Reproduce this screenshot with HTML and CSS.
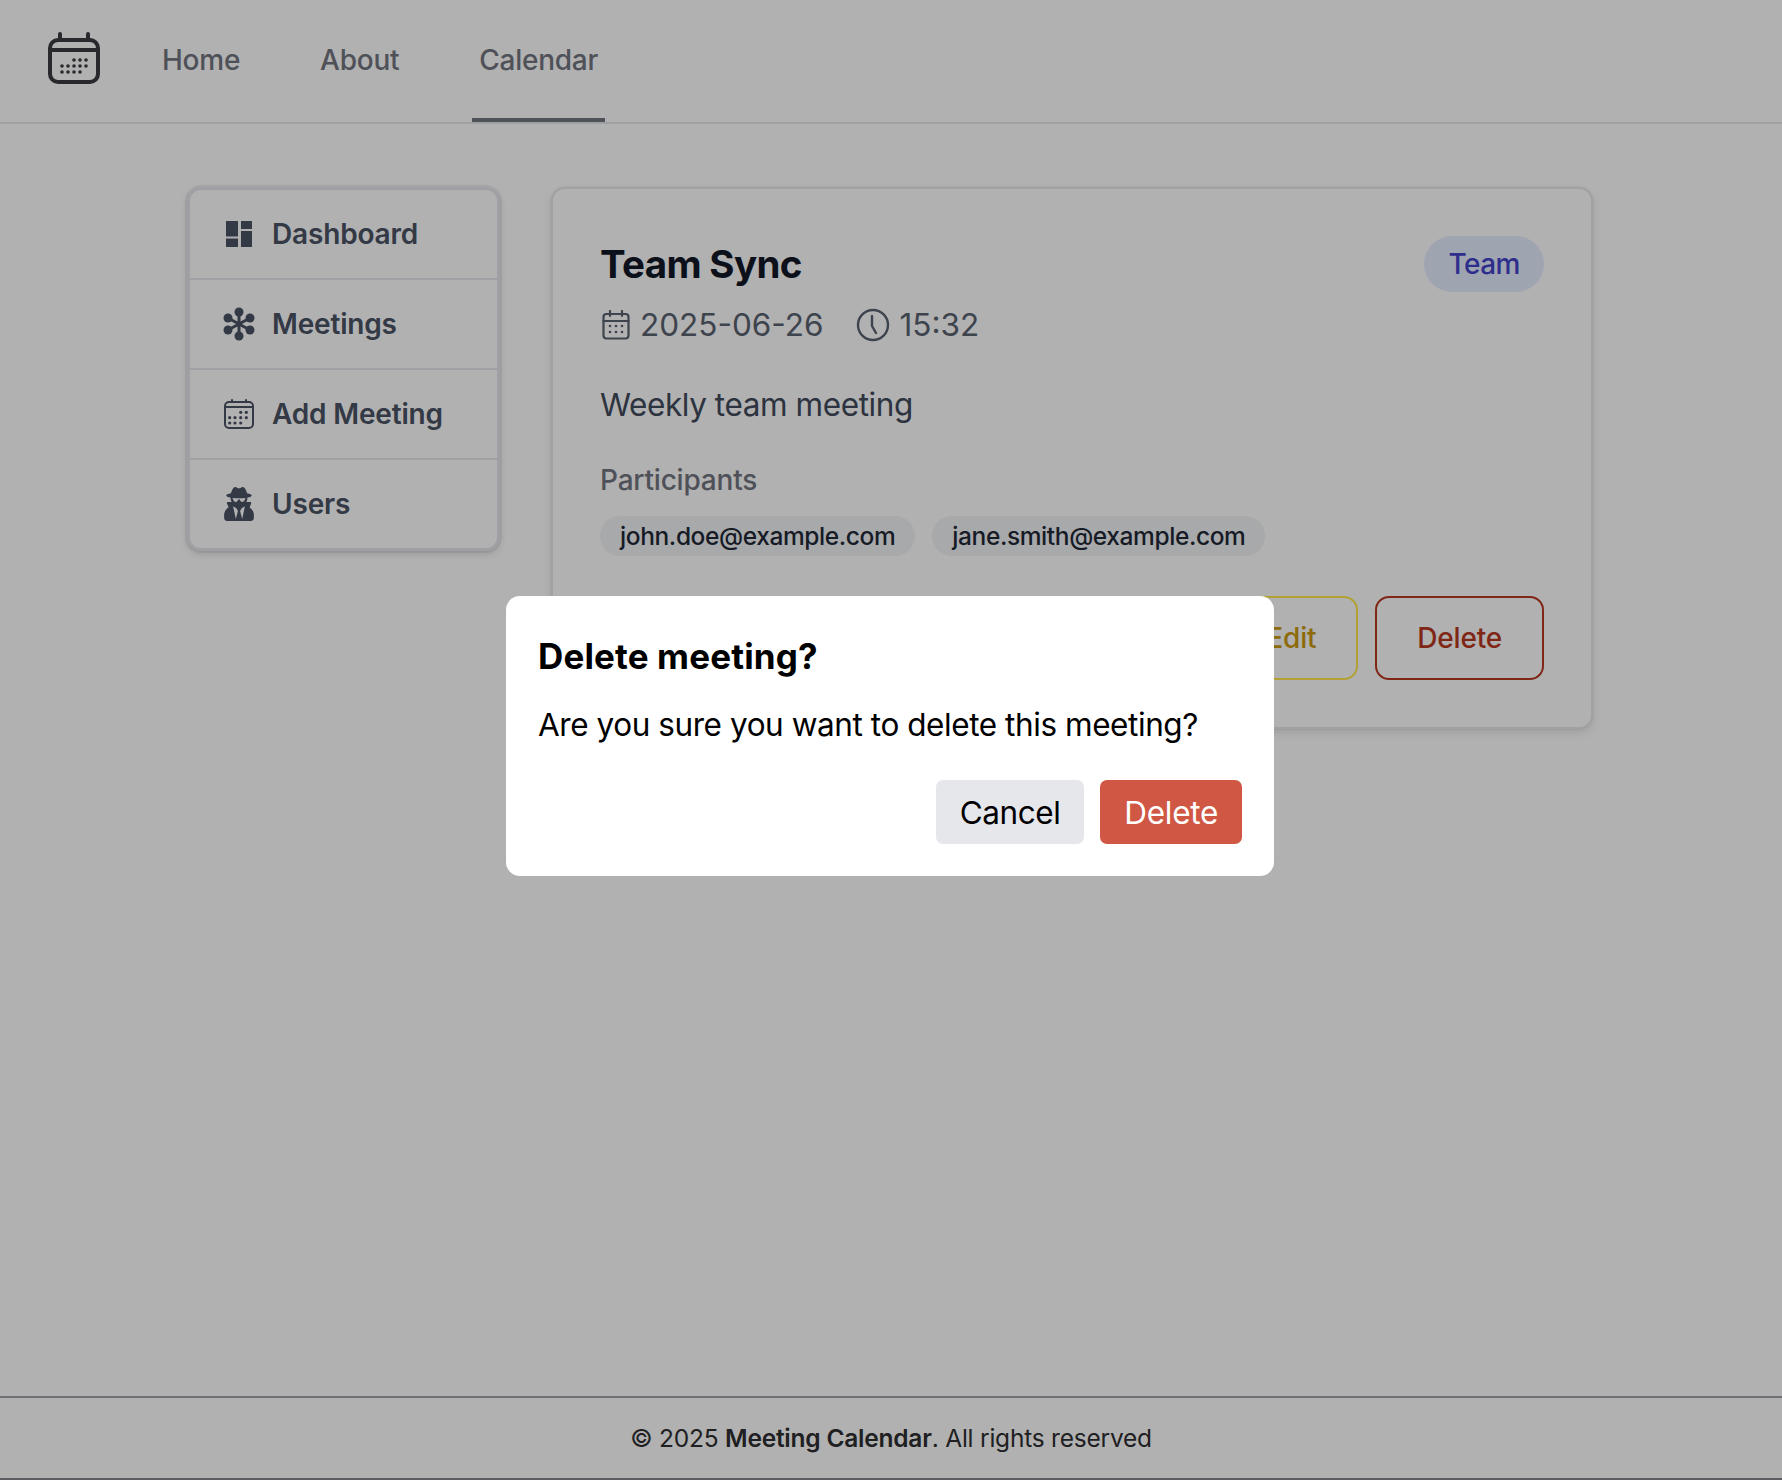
FILE: index.html
```html
<!DOCTYPE html>
<html lang="en">
<head>
    <meta charset="UTF-8">
    <meta name="viewport" content="width=device-width, initial-scale=1.0">
    <title>Meeting Calendar</title>
    <link rel="stylesheet" href="styles.css">
</head>
<body>
<header class="topbar">
    <a class="logo" href="#">
        <svg width="52" height="52" viewBox="0 0 52 52" fill="none" stroke="#3c3c42" stroke-width="4" stroke-linecap="round">
            <rect x="2" y="8" width="48" height="42" rx="8"/>
            <path d="M2 18h48M12 2v6M40 2v6"/>
            <g fill="#3c3c42" stroke="none">
                <circle cx="26" cy="28" r="1.8"/><circle cx="32" cy="28" r="1.8"/><circle cx="38" cy="28" r="1.8"/>
                <circle cx="14" cy="34" r="1.8"/><circle cx="20" cy="34" r="1.8"/><circle cx="26" cy="34" r="1.8"/><circle cx="32" cy="34" r="1.8"/><circle cx="38" cy="34" r="1.8"/>
                <circle cx="14" cy="40" r="1.8"/><circle cx="20" cy="40" r="1.8"/><circle cx="26" cy="40" r="1.8"/><circle cx="32" cy="40" r="1.8"/>
            </g>
        </svg>
    </a>
    <nav class="mainnav">
        <a href="#">Home</a>
        <a href="#">About</a>
        <a class="active" href="#">Calendar</a>
    </nav>
</header>

<main class="content">
    <aside class="sidemenu">
        <a href="#">
            <span class="sideicon">
                <svg width="26" height="26" viewBox="0 0 26 26" fill="#4a5264">
                    <rect x="0" y="0" width="12" height="15.5"/>
                    <rect x="0" y="17.5" width="12" height="8.5"/>
                    <rect x="15" y="0" width="11" height="8"/>
                    <rect x="15" y="10" width="11" height="16"/>
                </svg>
            </span>
            Dashboard
        </a>
        <a href="#">
            <span class="sideicon">
                <svg width="32" height="34" viewBox="0 0 32 34" fill="#4a5264" stroke="#4a5264" stroke-width="3">
                    <path d="M16 5v24M5 11l22 12M27 11L5 23" fill="none"/>
                    <g stroke="none">
                        <circle cx="16" cy="5" r="4.5"/><circle cx="16" cy="29" r="4.5"/>
                        <circle cx="5" cy="11" r="4.5"/><circle cx="27" cy="11" r="4.5"/>
                        <circle cx="5" cy="23" r="4.5"/><circle cx="27" cy="23" r="4.5"/>
                    </g>
                </svg>
            </span>
            Meetings
        </a>
        <a href="#">
            <span class="sideicon">
                <svg width="30" height="30" viewBox="0 0 30 30" fill="none" stroke="#4a5264" stroke-width="2" stroke-linecap="round">
                    <rect x="1" y="3" width="28" height="26" rx="4"/>
                    <path d="M1 8h28M8 1v2M22 1v2"/>
                    <g fill="#4a5264" stroke="none">
                        <circle cx="16.7" cy="13.3" r="1.6"/><circle cx="22.3" cy="13.3" r="1.6"/>
                        <circle cx="5.7" cy="18.7" r="1.6"/><circle cx="11" cy="18.7" r="1.6"/><circle cx="16.7" cy="18.7" r="1.6"/><circle cx="22.3" cy="18.7" r="1.6"/>
                        <circle cx="5.7" cy="24" r="1.6"/><circle cx="11" cy="24" r="1.6"/><circle cx="16.7" cy="24" r="1.6"/>
                    </g>
                </svg>
            </span>
            Add Meeting
        </a>
        <a href="#">
            <span class="sideicon">
                <svg width="30" height="34" viewBox="0 0 448 512" fill="#4a5264">
                    <path d="M383.9 308.3l23.9-62.6c4-10.5-3.7-21.7-15-21.7h-58.5c11-18.9 17.8-40.6 17.8-64v-.3c39.2-7.8 64-19.1 64-31.7 0-13.3-27.3-25.1-70.1-33-9.2-32.8-27-65.8-40.6-82.8-9.5-11.9-25.9-15.6-39.5-8.8l-27.6 13.8c-9 4.5-19.6 4.5-28.6 0L182.1 3.4c-13.6-6.8-30-3.1-39.5 8.8-13.5 17-31.4 50-40.6 82.8-42.7 7.9-70 19.7-70 33 0 12.6 24.8 23.9 64 31.7v.3c0 23.4 6.8 45.1 17.8 64H56.3c-11.5 0-19.2 11.7-14.7 22.3l25.8 60.2C27.3 329.8 0 372.7 0 422.4v44.8C0 491.9 20.1 512 44.8 512h358.4c24.7 0 44.8-20.1 44.8-44.8v-44.8c0-48.4-25.8-90.4-64.1-114.1zM176 480l-41.6-192 49.6 32 24 40-32 120zm96 0l-32-120 24-40 49.6-32L272 480zm41.7-298.5c-3.9 11.9-7 24.6-16.5 33.4-10.1 9.3-48 22.4-64-25-2.8-8.4-15.4-8.4-18.3 0-17 50.2-56 32.4-64 25-9.5-8.8-12.7-21.5-16.5-33.4-.8-2.5-6.3-5.7-6.3-5.8v-10.8c28.3 3.6 61 5.8 96 5.8s67.7-2.2 96-5.8v10.8c-.1.1-5.6 3.2-6.4 5.8z"/>
                </svg>
            </span>
            Users
        </a>
    </aside>

    <section class="card">
        <div class="cardhead">
            <div>
                <h2 class="cardtitle">Team Sync</h2>
                <div class="meta">
                    <span class="metaitem">
                        <svg width="28" height="30" viewBox="0 0 28 30" fill="none" stroke="#5a6270" stroke-width="2.2" stroke-linecap="round">
                            <rect x="1.5" y="4" width="25" height="24.5" rx="3"/>
                            <path d="M1.5 11h25M8 1v5M20 1v5"/>
                            <g fill="#5a6270" stroke="none">
                                <circle cx="8" cy="16" r="1.3"/><circle cx="14" cy="16" r="1.3"/><circle cx="20" cy="16" r="1.3"/>
                                <circle cx="8" cy="22" r="1.3"/><circle cx="14" cy="22" r="1.3"/><circle cx="20" cy="22" r="1.3"/>
                            </g>
                        </svg>
                        2025-06-26
                    </span>
                    <span class="metaitem">
                        <svg width="34" height="34" viewBox="0 0 34 34" fill="none" stroke="#5a6270" stroke-width="2.4" stroke-linecap="round">
                            <circle cx="17" cy="17" r="15"/>
                            <path d="M16 8v10l4 7"/>
                        </svg>
                        15:32
                    </span>
                </div>
            </div>
            <span class="badge">Team</span>
        </div>
        <p class="desc">Weekly team meeting</p>
        <div class="sublabel">Participants</div>
        <div class="chips">
            <span class="chip">john.doe@example.com</span>
            <span class="chip">jane.smith@example.com</span>
        </div>
        <div class="cardactions">
            <button class="outline edit" type="button">Edit</button>
            <button class="outline remove" type="button">Delete</button>
        </div>
    </section>
</main>

<footer class="pagefoot">
    <span>© 2025 <strong>Meeting Calendar</strong>. All rights reserved</span>
</footer>

<div class="backdrop">
    <div class="dialog">
        <h3 class="dialogtitle">Delete meeting?</h3>
        <p class="dialogtext">Are you sure you want to delete this meeting?</p>
        <div class="dialogactions">
            <button class="cancelbtn" type="button">Cancel</button>
            <button class="confirmbtn" type="button">Delete</button>
        </div>
    </div>
</div>
</body>
</html>
```

FILE: styles.css
```css
* {
    box-sizing: border-box;
}
body {
    margin: 0;
    min-height: 100vh;
    display: flex;
    flex-direction: column;
    background-color: #fff;
    font-family: 'Inter', 'Liberation Sans', sans-serif;
    color: #111827;
}
a {
    text-decoration: none;
}

/* top navigation */
.topbar {
    height: 124px;
    display: flex;
    align-items: flex-start;
    padding-left: 48px;
    border-bottom: 2px solid #e5e7eb;
}
.logo {
    display: flex;
    margin-top: 32px;
}
.mainnav {
    display: flex;
    gap: 66px;
    margin-left: 55px;
}
.mainnav a {
    height: 122px;
    padding: 2px 7px 0;
    display: flex;
    align-items: center;
    font-size: 28px;
    font-weight: 500;
    letter-spacing: -0.25px;
    color: #737580;
    border-bottom: 4px solid transparent;
}
.mainnav a.active {
    border-bottom-color: #737580;
}

/* main layout */
.content {
    flex: 1;
    display: flex;
    align-items: flex-start;
    gap: 51px;
    padding: 63px 189px 0 187px;
}
.sidemenu {
    width: 313px;
    flex-shrink: 0;
    display: flex;
    flex-direction: column;
    border: 3px solid #e5e7eb;
    border-radius: 14px;
    background: #fff;
    box-shadow: 0 0 0 2px rgba(0, 0, 0, 0.05), 0 3px 7px rgba(0, 0, 0, 0.14);
}
.sidemenu a {
    height: 90px;
    display: flex;
    align-items: center;
    gap: 17px;
    padding-left: 33px;
    font-size: 28px;
    font-weight: 600;
    letter-spacing: -0.17px;
    color: #4a5264;
    border-bottom: 2px solid #e5e7eb;
}
.sidemenu a:last-child {
    border-bottom: none;
    height: 88px;
}
.sideicon {
    width: 32px;
    display: flex;
    justify-content: center;
}

/* meeting card */
.card {
    flex: 1;
    padding: 47px;
    border: 2px solid #e8e8ec;
    border-radius: 14px;
    background: #fff;
    box-shadow: 0 0 0 1px rgba(0, 0, 0, 0.03), 0 4px 8px rgba(0, 0, 0, 0.1);
}
.cardhead {
    display: flex;
    justify-content: space-between;
    align-items: flex-start;
}
.cardtitle {
    margin: 0;
    font-size: 38.5px;
    line-height: 56px;
    font-weight: 700;
    letter-spacing: -0.65px;
    color: #111827;
}
.meta {
    display: flex;
    gap: 32px;
    margin-top: 10px;
    margin-left: 2px;
    font-size: 31.5px;
    line-height: 46px;
    color: #5a6270;
}
.metaitem {
    display: flex;
    align-items: center;
    gap: 10px;
}
.badge {
    height: 56px;
    padding: 0 24px;
    display: flex;
    align-items: center;
    border-radius: 28px;
    background: #e6edff;
    color: #4343cb;
    font-size: 28px;
    font-weight: 500;
    letter-spacing: -0.5px;
}
.desc {
    margin: 35px 0 0;
    font-size: 31.5px;
    line-height: 44px;
    letter-spacing: -0.42px;
    color: #414a5c;
}
.sublabel {
    margin-top: 33px;
    font-size: 28px;
    line-height: 40px;
    font-weight: 500;
    letter-spacing: -0.2px;
    color: #737580;
}
.chips {
    display: flex;
    gap: 17px;
    margin-top: 16px;
}
.chip {
    height: 40px;
    padding: 0 20px;
    display: flex;
    align-items: center;
    border-radius: 20px;
    background: #f3f4f6;
    color: #1f2937;
    font-size: 24.5px;
    font-weight: 500;
    letter-spacing: -0.4px;
}
.cardactions {
    display: flex;
    justify-content: flex-end;
    gap: 17px;
    margin-top: 40px;
}
button {
    font-family: inherit;
    cursor: pointer;
}
.outline {
    height: 84px;
    padding: 0 40px;
    background: transparent;
    border-radius: 14px;
    border: 2px solid;
    font-size: 28px;
    font-weight: 500;
    letter-spacing: -0.2px;
}
.edit {
    border-color: #ffe84d;
    color: #cb9a10;
}
.remove {
    border-color: #b83820;
    color: #b83820;
}

/* footer */
.pagefoot {
    height: 84px;
    display: flex;
    align-items: center;
    justify-content: center;
    border-top: 2px solid #a1a1aa;
    border-bottom: 2px solid #85858c;
    font-size: 24.5px;
    letter-spacing: -0.22px;
    color: #2f2f32;
}
.pagefoot strong {
    font-weight: 600;
}

/* delete confirmation */
.backdrop {
    position: fixed;
    inset: 0;
    display: flex;
    align-items: center;
    justify-content: center;
    padding: 0 2px 8px 0;
    background: rgba(0, 0, 0, 0.305);
}
.dialog {
    width: 768px;
    padding: 32px;
    background: #fff;
    border-radius: 14px;
}
.dialogtitle {
    margin: 0;
    font-size: 35px;
    line-height: 56px;
    font-weight: 700;
    letter-spacing: 0.15px;
    color: #000;
}
.dialogtext {
    margin: 19px 0 0;
    font-size: 31.5px;
    line-height: 44px;
    letter-spacing: -0.43px;
    color: #000;
}
.dialogactions {
    display: flex;
    justify-content: flex-end;
    gap: 16px;
    margin-top: 33px;
}
.cancelbtn, .confirmbtn {
    height: 64px;
    padding: 0 24px;
    border: none;
    border-radius: 7px;
    font-size: 31.5px;
    letter-spacing: -0.45px;
}
.cancelbtn {
    background: #e5e7eb;
    color: #000;
}
.confirmbtn {
    background: #cf5744;
    color: #fff;
    letter-spacing: -0.3px;
}
```
